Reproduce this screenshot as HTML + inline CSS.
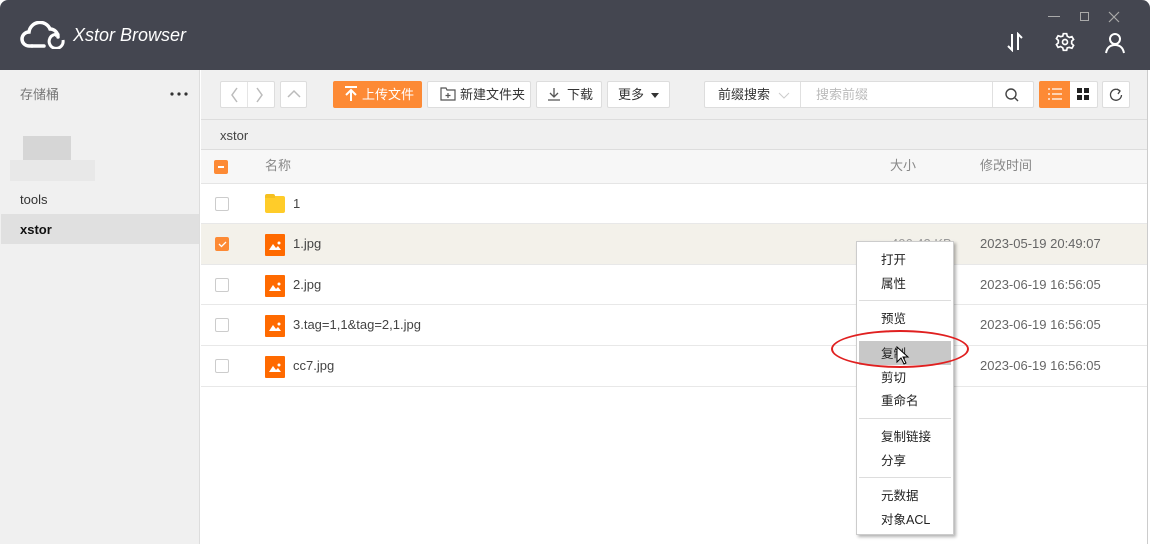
<!DOCTYPE html><html><head><meta charset="utf-8"><style>
*{margin:0;padding:0;box-sizing:border-box}
body{width:1150px;height:544px;overflow:hidden;background:#fff;font-family:"Liberation Sans","Noto Sans CJK SC",sans-serif;font-size:13px;line-height:16px;color:#333;position:relative}
.a{position:absolute}
.hdr{left:0;top:0;width:1150px;height:70px;background:#444650;border-radius:8px 8px 0 0}
.side{left:0;top:70px;width:200px;height:474px;background:#f0f0f0;border-right:1px solid #ddd}
.btn{position:absolute;top:81px;height:27px;background:#fff;border:1px solid #ddd;border-radius:2px;font-size:13px;line-height:25px;color:#333}
.row{position:absolute;left:201px;width:946px;height:41px;border-bottom:1px solid #e8e8e8;background:#fff}
.cb{position:absolute;left:14px;top:13px;width:14px;height:14px;border:1px solid #ccc;border-radius:2px;background:#fff}
.nm{position:absolute;left:92px;top:12px;color:#444}
.tm{position:absolute;left:779px;top:12px;color:#666}
.ic{position:absolute;left:64px;top:10px;width:20px;height:22px;background:#ff6a00;border-radius:1px}
.mi{position:absolute;left:24px;font-size:12.5px;color:#222}
</style></head><body>
<div class="a hdr"></div>
<svg class="a" style="left:20px;top:21px" width="46" height="28" viewBox="0 0 46 28"><path d="M12 25H9a7 7 0 0 1 0-14 11 11 0 0 1 21-3 8 8 0 0 1 8 8" fill="none" stroke="#fff" stroke-width="3.5" stroke-linecap="round"/><path d="M12 25h12" stroke="#fff" stroke-width="3.5" stroke-linecap="round"/><path d="M43 19a7 7 0 1 1-4-5" fill="none" stroke="#fff" stroke-width="3"/><path d="M36 10l4 4-5 2z" fill="#fff"/></svg>
<div class="a" style="left:73px;top:27px;color:#fff;font-size:18px;font-style:italic">Xstor Browser</div>
<div class="a" style="left:1048px;top:16px;width:12px;height:1px;background:#aaa"></div>
<div class="a" style="left:1080px;top:12px;width:9px;height:9px;border:1px solid #aaa"></div>
<svg class="a" style="left:1108px;top:11px" width="12" height="12" stroke="#aaa" stroke-width="1.2"><path d="M1 1l10 10M11 1L1 11"/></svg>
<svg class="a" style="left:1005px;top:32px" width="20" height="20" viewBox="0 0 20 20" fill="none" stroke="#fff" stroke-width="2"><path d="M7 2v16l-4-4M13 18V2l4 4"/></svg>
<svg class="a" style="left:1055px;top:32px" width="20" height="20" viewBox="0 0 24 24" fill="none" stroke="#fff" stroke-width="2"><circle cx="12" cy="12" r="3"/><path d="M10 2h4l.7 3 2.6 1.5 3-1 2 3.4-2.3 2.1v3l2.3 2.1-2 3.4-3-1L14.7 19 14 22h-4l-.7-3-2.6-1.5-3 1-2-3.4L4 13v-3L1.7 7.9l2-3.4 3 1L9.3 5z"/></svg>
<svg class="a" style="left:1104px;top:32px" width="22" height="22" viewBox="0 0 22 22" fill="none" stroke="#fff" stroke-width="2"><circle cx="11" cy="7" r="5"/><path d="M2 21c1-5 4-8 9-8s8 3 9 8"/></svg>
<div class="a side"></div>
<div class="a" style="left:20px;top:87px;color:#777">存储桶</div>
<svg class="a" style="left:170px;top:92px" width="18" height="4" fill="#333"><circle cx="2" cy="2" r="1.6"/><circle cx="9" cy="2" r="1.6"/><circle cx="16" cy="2" r="1.6"/></svg>
<div class="a" style="left:23px;top:136px;width:48px;height:24px;background:#d6d6d6"></div>
<div class="a" style="left:10px;top:160px;width:85px;height:21px;background:#e8e8e8"></div>
<div class="a" style="left:20px;top:192px">tools</div>
<div class="a" style="left:1px;top:214px;width:198px;height:30px;background:#e0e0e0"></div>
<div class="a" style="left:20px;top:222px;font-weight:bold;color:#111">xstor</div>
<div class="a" style="left:201px;top:70px;width:946px;height:80px;background:#f0f0f0;border-bottom:1px solid #ddd"></div>
<div class="a" style="left:201px;top:119px;width:946px;height:1px;background:#ddd"></div>
<div class="btn" style="left:220px;width:55px;top:81px"></div>
<div class="a" style="left:247px;top:82px;width:1px;height:25px;background:#e5e5e5"></div>
<svg class="a" style="left:229px;top:87px" width="40" height="16" fill="none" stroke="#bbb" stroke-width="1.5"><path d="M8 1L3 8l5 7M28 1l5 7-5 7"/></svg>
<div class="btn" style="left:280px;width:27px"></div>
<svg class="a" style="left:287px;top:89px" width="14" height="10"><path d="M1 8l6-6 6 6" fill="none" stroke="#bbb" stroke-width="1.5"/></svg>
<div class="btn" style="left:333px;width:89px;background:#fd8a35;border-color:#fd8a35;color:#fff;padding-left:28px">上传文件</div>
<svg class="a" style="left:344px;top:86px" width="14" height="16" fill="none" stroke="#fff" stroke-width="2"><path d="M1 1h12M7 15V4M2 9l5-5 5 5"/></svg>
<div class="btn" style="left:427px;width:104px;padding-left:32px">新建文件夹</div>
<svg class="a" style="left:440px;top:87px" width="16" height="14" fill="none" stroke="#555" stroke-width="1.2"><path d="M1 1h5l1 2h8v10H1zM8 6v5M5.5 8.5h5"/></svg>
<div class="btn" style="left:536px;width:66px;padding-left:30px">下载</div>
<svg class="a" style="left:547px;top:87px" width="14" height="14" fill="none" stroke="#555" stroke-width="1.3"><path d="M7 1v9M3 6l4 4 4-4M1 13h12"/></svg>
<div class="btn" style="left:607px;width:63px;padding-left:10px">更多</div>
<div class="a" style="left:651px;top:93px;border:4px solid transparent;border-top:5px solid #333"></div>
<div class="btn" style="left:704px;width:330px"></div>
<div class="a" style="left:718px;top:87px">前缀搜索</div>
<svg class="a" style="left:778px;top:92px" width="12" height="7" fill="none" stroke="#ccc"><path d="M1 1l5 5 5-5"/></svg>
<div class="a" style="left:800px;top:82px;width:1px;height:25px;background:#e0e0e0"></div>
<div class="a" style="left:816px;top:87px;color:#bbb">搜索前缀</div>
<div class="a" style="left:992px;top:82px;width:1px;height:25px;background:#e0e0e0"></div>
<svg class="a" style="left:1005px;top:88px" width="14" height="14" fill="none" stroke="#444" stroke-width="1.4"><circle cx="6" cy="6" r="5"/><path d="M10 10l3 3"/></svg>
<div class="btn" style="left:1039px;width:59px"></div>
<div class="a" style="left:1039px;top:81px;width:31px;height:27px;background:#fd8a35;border-radius:2px 0 0 2px"></div>
<svg class="a" style="left:1048px;top:88px" width="14" height="12" fill="none" stroke="#fff" stroke-width="1.3"><path d="M0 1h2M4 1h10M0 6h2M4 6h10M0 11h2M4 11h10"/></svg>
<svg class="a" style="left:1077px;top:88px" width="12" height="12" fill="#222"><rect width="5" height="5"/><rect x="7" width="5" height="5"/><rect y="7" width="5" height="5"/><rect x="7" y="7" width="5" height="5"/></svg>
<div class="btn" style="left:1102px;width:28px"></div>
<svg class="a" style="left:1109px;top:88px" width="14" height="14" fill="none" stroke="#444" stroke-width="1.3"><path d="M11 3a5.5 5.5 0 1 0 1.5 4"/><path d="M8 1l3 2-2 3" /></svg>
<div class="a" style="left:220px;top:128px;color:#444">xstor</div>
<div class="a" style="left:201px;top:150px;width:946px;height:34px;background:#f7f7f7;border-bottom:1px solid #e5e5e5"></div>
<div class="a" style="left:214px;top:160px;width:14px;height:14px;background:#fd8a35;border-radius:2px"></div>
<div class="a" style="left:218px;top:166px;width:6px;height:2px;background:#fff"></div>
<div class="a" style="left:265px;top:158px;color:#888">名称</div>
<div class="a" style="left:890px;top:158px;color:#888">大小</div>
<div class="a" style="left:980px;top:158px;color:#888">修改时间</div>
<div class="row" style="top:184px;height:40px"><div class="cb"></div><div class="ic" style="background:#ffcc29;top:12px;height:17px;border-radius:2px"></div><div class="a" style="left:64px;top:10px;width:10px;height:4px;background:#f5c020;border-radius:2px 2px 0 0"></div><div class="nm">1</div></div>
<div class="row" style="top:224px;background:#f3f1ea"><div class="cb" style="background:#fd8a35;border-color:#fd8a35"><svg class="a" style="left:2px;top:3px" width="9" height="7" fill="none" stroke="#fff" stroke-width="1.3"><path d="M1 3l2.5 2.5L8 1"/></svg></div><div class="ic"><svg width="20" height="22"><path d="M4 16l4-6 3 4 2-2 3 4z" fill="#fff"/><circle cx="14" cy="9" r="1.5" fill="#fff"/></svg></div><div class="nm">1.jpg</div><div class="a" style="left:690px;top:12px;color:#999">406.42 KB</div><div class="tm">2023-05-19 20:49:07</div></div>
<div class="row" style="top:265px;height:40px"><div class="cb"></div><div class="ic"><svg width="20" height="22"><path d="M4 16l4-6 3 4 2-2 3 4z" fill="#fff"/><circle cx="14" cy="9" r="1.5" fill="#fff"/></svg></div><div class="nm">2.jpg</div><div class="tm">2023-06-19 16:56:05</div></div>
<div class="row" style="top:305px"><div class="cb"></div><div class="ic"><svg width="20" height="22"><path d="M4 16l4-6 3 4 2-2 3 4z" fill="#fff"/><circle cx="14" cy="9" r="1.5" fill="#fff"/></svg></div><div class="nm">3.tag=1,1&amp;tag=2,1.jpg</div><div class="tm">2023-06-19 16:56:05</div></div>
<div class="row" style="top:346px"><div class="cb"></div><div class="ic"><svg width="20" height="22"><path d="M4 16l4-6 3 4 2-2 3 4z" fill="#fff"/><circle cx="14" cy="9" r="1.5" fill="#fff"/></svg></div><div class="nm">cc7.jpg</div><div class="tm">2023-06-19 16:56:05</div></div>
<div class="a" style="left:1147px;top:70px;width:1px;height:474px;background:#ccc"></div>
<div class="a" style="left:856px;top:241px;width:98px;height:294px;background:#fff;border:1px solid #ccc;box-shadow:2px 2px 3px rgba(0,0,0,.3)">
<div class="mi" style="top:10px">打开</div><div class="mi" style="top:34px">属性</div>
<div class="a" style="left:2px;top:58px;width:92px;height:1px;background:#ddd"></div>
<div class="mi" style="top:69px">预览</div>
<div class="a" style="left:2px;top:99px;width:92px;height:24px;background:#c8c8c8"></div>
<div class="mi" style="top:104px">复制</div><div class="mi" style="top:128px">剪切</div><div class="mi" style="top:151px">重命名</div>
<div class="a" style="left:2px;top:176px;width:92px;height:1px;background:#ddd"></div>
<div class="mi" style="top:187px">复制链接</div><div class="mi" style="top:211px">分享</div>
<div class="a" style="left:2px;top:235px;width:92px;height:1px;background:#ddd"></div>
<div class="mi" style="top:246px">元数据</div><div class="mi" style="top:270px">对象ACL</div>
</div>
<div class="a" style="left:831px;top:330px;width:138px;height:38px;border:2px solid #e02020;border-radius:50%"></div>
<svg class="a" style="left:896px;top:346px" width="14" height="20"><path d="M1 1v15l4-4 3 6 2-1-3-6h5z" fill="#fff" stroke="#000"/></svg>
</body></html>
